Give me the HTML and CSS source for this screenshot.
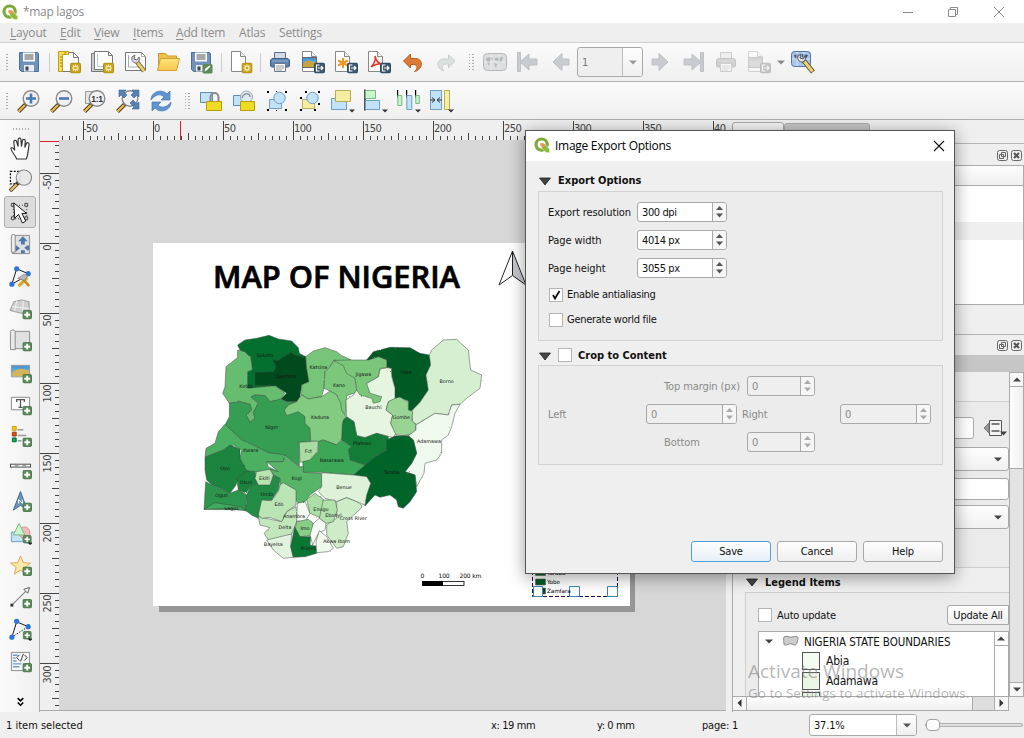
FILE: index.html
```html
<!DOCTYPE html>
<html lang="en">
<head>
<meta charset="utf-8">
<title>*map lagos</title>
<link rel="stylesheet" href="styles.css">
</head>
<body>
<svg class="sprite" aria-hidden="true">
  <defs>
    <linearGradient id="gSky" x1="0" y1="0" x2="0" y2="1"><stop offset="0" stop-color="#3d8fd0"/><stop offset="1" stop-color="#9cc9dc"/></linearGradient>
    <linearGradient id="gFolder" x1="0" y1="0" x2="0" y2="1"><stop offset="0" stop-color="#ffe47a"/><stop offset="1" stop-color="#f6c54c"/></linearGradient>
    <symbol id="logo" viewBox="0 0 16 16"><circle cx="7.6" cy="7.6" r="5.6" fill="none" stroke="#7fa93a" stroke-width="3.2"/><path d="M7.5 7.5h3.6l4.6 4.8v3.4h-3.6L7.5 11z" fill="#8fb83a" stroke="#fff" stroke-width=".6"/><path d="M6.4 6.2h3.4l1.6 1.7-2.4 2.6-2.6-2z" fill="#e8944a"/></symbol>
    <symbol id="b-plus" viewBox="0 0 10 10"><rect x=".5" y=".5" width="9" height="9" rx="1.5" fill="#5a8a5a" stroke="#47784a"/><path d="M5 2v6M2 5h6" stroke="#fff" stroke-width="2"/></symbol>
    <symbol id="b-new" viewBox="0 0 11 11"><rect x=".5" y=".5" width="10" height="10" rx="1.5" fill="#c9a21b" stroke="#b08c10"/><path d="M5.500 2v7M2 5.500h7M3 3l5 5M8 3L3 8" stroke="#fff7d0" stroke-width="1.100"/><circle cx="5.500" cy="5.500" r="1.300" fill="#c9a21b"/></symbol>
    <symbol id="b-exp" viewBox="0 0 11 11"><rect x=".5" y=".5" width="10" height="10" rx="1.500" fill="#3d586d" stroke="#2d475b"/><path d="M5.500 2.500h-3v6h3M4 5.500h4.500M7 3.500l2 2-2 2" fill="none" stroke="#fff" stroke-width="1.200"/></symbol>
    <symbol id="sheet" viewBox="0 0 24 24"><path d="M5.500 1.500h9l5 5v15h-14z" fill="#fff" stroke="#888"/><path d="M14.500 1.500v5h5" fill="#eee" stroke="#888"/></symbol>
    <symbol id="save" viewBox="0 0 24 24"><path d="M2.500 2.500h18l1 1v18h-17l-2-2z" fill="#6d93bd" stroke="#4b6f9a"/><path d="M6 2.500h12v9H6z" fill="#fbfbfb"/><path d="M7.500 5h9M7.500 7h9M7.500 9h9" stroke="#555"/><path d="M7 15h10v6.500H7z" fill="#e9edf0"/><path d="M8.500 16.500h3v4h-3z" fill="#445"/></symbol>
    <symbol id="saveas" viewBox="0 0 24 24"><use href="#save"/><rect x="13.500" y="14" width="10" height="9.500" rx="1.500" fill="#5a8a5a"/><path d="M15.500 21.500l1-3 4-3 1 1-4 4z" fill="#fff"/></symbol>
    <symbol id="newlayout" viewBox="0 0 24 24"><path d="M4.500 2.500h12l5 5v14h-17z" fill="#fff" stroke="#777"/><path d="M16.500 2.500v5h5" fill="none" stroke="#777"/><path d="M1.500 1.500h10v3h-6v17h-4z" fill="#f5dc5b" stroke="#c29d16"/><path d="M3 7h2M3 10h2M3 13h2M3 16h2M8 2v2" stroke="#a8850c"/><use href="#b-new" x="13" y="12.500" width="11" height="11"/></symbol>
    <symbol id="duplayout" viewBox="0 0 24 24"><path d="M1.500 3.500h15v18h-15z" fill="#ccc" stroke="#777"/><path d="M4.500 1.500h14l4 4v14h-18z" fill="#fff" stroke="#777"/><path d="M18.500 1.500v4h4" fill="none" stroke="#777"/><path d="M7.500 3.500v13h12" fill="none" stroke="#b9c4e6"/><use href="#b-new" x="13" y="12.500" width="11" height="11"/></symbol>
    <symbol id="mgr" viewBox="0 0 24 24"><path d="M2.500 2.500h16l4 4v14h-20z" fill="#fff" stroke="#777"/><path d="M18.500 2.500v4h4M5.500 5v12h14" fill="none" stroke="#a9a9b5"/><path d="M14 12l7 9" stroke="#8b7330" stroke-width="4.500"/><path d="M14 12l7 9" stroke="#e9d27a" stroke-width="2.500"/><path d="M9 7c-1 4 1 6 5 6 2-1 3-3 2-6l-2 3-3-1 1-4z" fill="#ddd" stroke="#666"/></symbol>
    <symbol id="folder" viewBox="0 0 24 24"><path d="M2.500 20V3.500h7l2 2.500h9v3" fill="#f0c24c" stroke="#c9962a"/><path d="M1.500 20.500l3-12h19l-3 12z" fill="url(#gFolder)" stroke="#d0a030"/></symbol>
    <symbol id="addpage" viewBox="0 0 24 24"><g transform="translate(-3)"><use href="#sheet"/></g><use href="#b-new" x="12.500" y="12.500" width="11" height="11"/></symbol>
    <symbol id="print" viewBox="0 0 24 24"><path d="M6.500 2.500h11v7h-11z" fill="#d5dbe2" stroke="#5b718a"/><path d="M4 8.500h16l1.500 1.500v6l-1 1h-17l-1-1v-6z" fill="#5d84b0" stroke="#3e5f86"/><path d="M4 11h16" stroke="#94b2d2"/><path d="M6.500 13.500h11v8h-11z" fill="#fff" stroke="#6a7a8a"/><path d="M8 16h8M8 18h8M8 20h6" stroke="#999"/></symbol>
    <symbol id="expimg" viewBox="0 0 24 24"><g transform="translate(-4)"><use href="#sheet"/></g><path d="M1.500 7.500h14v10h-14z" fill="url(#gSky)" stroke="#667"/><path d="M2 14c3-4 6-4 13-1v4H2z" fill="#c9a43c"/><use href="#b-exp" x="13" y="12.500" width="11" height="11"/></symbol>
    <symbol id="expsvg" viewBox="0 0 24 24"><g transform="translate(-4)"><use href="#sheet"/></g><path d="M9 8v10M4 10.500l10 5M14 10.500l-10 5" stroke="#f0941f" stroke-width="2"/><use href="#b-exp" x="13" y="12.500" width="11" height="11"/></symbol>
    <symbol id="exppdf" viewBox="0 0 24 24"><g transform="translate(-4)"><use href="#sheet"/></g><path d="M4 17c3-3 5-7 4-11 1 5 3 8 8 8-5-1-9 1-12 3z" fill="none" stroke="#e0352b" stroke-width="1.500"/><use href="#b-exp" x="13" y="12.500" width="11" height="11"/></symbol>
    <symbol id="undo" viewBox="0 0 24 24"><path d="M2.500 11L9.500 4v4.500h5c8 0 8 11-1 13 4-3 3-7-1-7h-3V18z" fill="#dd7a35" stroke="#b85e1e"/></symbol>
    <symbol id="redo" viewBox="0 0 24 24"><path d="M21 11l-6.500-6v4H10c-8 0-8 10 0 12-3-3-2-7 2-7h2.500V18z" fill="#dde1dd" stroke="#c9cdc9"/></symbol>
    <symbol id="atlas" viewBox="0 0 24 24"><rect x=".5" y="3.500" width="23" height="17" rx="4" fill="#dcdedf" stroke="#b5b7b8"/><path d="M3 8l5-1 2 2-3 2-1 5-2-4zM12 8l8-1-1 4-3 3-1-3-3-1zM11 13l3 1-1 4z" fill="#b4b7b9"/><path d="M8 4v16M16 4v16M1 12h22" stroke="#e9eaeb"/></symbol>
    <symbol id="first" viewBox="0 0 24 24"><path d="M1.500 2.500h3v19h-3zM4 12l9-8v5h8v6h-8v5z" fill="#c8ccd0" stroke="#bcc0c4"/></symbol>
    <symbol id="prev" viewBox="0 0 24 24"><path d="M4 12l9-8.500V9h7v6h-7v5.500z" fill="#c8ccd0" stroke="#bcc0c4"/></symbol>
    <symbol id="next" viewBox="0 0 24 24"><path d="M20 12l-9-8.500V9H4v6h7v5.500z" fill="#c8ccd0" stroke="#bcc0c4"/></symbol>
    <symbol id="last" viewBox="0 0 24 24"><path d="M19.500 2.500h3v19h-3zM20 12l-9-8v5H3v6h8v5z" fill="#c8ccd0" stroke="#bcc0c4"/></symbol>
    <symbol id="atlasset" viewBox="0 0 24 24"><rect x=".5" y="1.500" width="19" height="15" rx="3" fill="#a9c3ea" stroke="#4d72ac"/><path d="M3 5l4-1 1 3-3 3zM11 4l6 1-2 4-4-2z" fill="#3c5878"/><path d="M6 2v14M13 2v14M1 9h18" stroke="#dce9fb"/><path d="M13 11l9 11" stroke="#5d5430" stroke-width="5"/><path d="M13.500 11.500l8 10" stroke="#ecd279" stroke-width="3"/><path d="M7 6c-1 4 1 6 5 6 2-1 3-3 2-6l-2 3-3-1 1-4z" fill="#e6e6e6" stroke="#555"/></symbol>
    <symbol id="lens" viewBox="0 0 24 24"><path d="M1.500 22.500l8-8" stroke="#3a3320" stroke-width="4"/><path d="M1.500 22.500l6.500-6.500" stroke="#efb949" stroke-width="2.400"/><circle cx="14" cy="9.500" r="7.800" fill="#f1f1f3" stroke="#8a8a8a" stroke-width="1.400"/></symbol>
    <symbol id="zin" viewBox="0 0 24 24"><use href="#lens"/><path d="M14 4.500v10M9 9.500h10" stroke="#4679b5" stroke-width="2.600"/></symbol>
    <symbol id="zout" viewBox="0 0 24 24"><use href="#lens"/><path d="M9 9.500h10" stroke="#4679b5" stroke-width="2.600"/></symbol>
    <symbol id="z11" viewBox="0 0 24 24"><path d="M2.500 2.500h12v12h-12z" fill="#e6e6e6" stroke="#999"/><use href="#lens"/><text x="14" y="13" class="z11" text-anchor="middle">1:1</text></symbol>
    <symbol id="zfull" viewBox="0 0 24 24"><use href="#lens"/><g fill="#5482b5" stroke="#3d6596" stroke-width=".6"><path d="M3 1h7L8 3l3 3-3 3-3-3-2 2zM23 1h-7l2 2-3 3 3 3 3-3 2 2zM23 20h-7l2-2-4-4 3-3 4 4 2-2z"/></g></symbol>
    <symbol id="refresh" viewBox="0 0 24 24"><path d="M2 11C2 3 12-1 18 5l3-3v9h-9l3-3C11 4 6 6 2 11zM22 13c0 8-10 12-16 6l-3 3v-9h9l-3 3c4 4 9 2 13-3z" fill="#5f95cf" stroke="#4478b3" stroke-width=".7"/></symbol>
    <symbol id="lock" viewBox="0 0 24 24"><path d="M1.500 3.500h12v10h-12z" fill="#c2e2f8" stroke="#5f8cb0"/><path d="M11.500 13V8.500c0-6 8-6 8 0V13" fill="none" stroke="#8a8a8a" stroke-width="2"/><path d="M7.500 12.500h15v9h-15z" fill="#efdb22" stroke="#b79c10"/></symbol>
    <symbol id="unlock" viewBox="0 0 24 24"><path d="M1.500 6.500h12v10h-12z" fill="#c2e2f8" stroke="#5f8cb0"/><circle cx="14.500" cy="8" r="6" fill="#dcebf4" stroke="#9aa"/><path d="M10 9c2-6 8-5 8-1" fill="none" stroke="#999" stroke-width="1.500"/><path d="M8.500 12.500h14v9h-14z" fill="#efdb22" stroke="#b79c10"/></symbol>
    <symbol id="group" viewBox="0 0 24 24"><path d="M4.500 10.500h12v9h-12z" fill="#c2e2f8" stroke="#6d9dc2"/><circle cx="14.500" cy="9" r="5.700" fill="#c2e2f8" stroke="#6d9dc2"/><path d="M2 2h2v2H2zM20 2h2v2h-2zM2 20h2v2H2zM20 20h2v2h-2zM11 2h1v1h-1zM11 21h1v1h-1z" fill="#000"/></symbol>
    <symbol id="ungroup" viewBox="0 0 24 24"><path d="M4.500 10.500h12v9h-12z" fill="#f4eea0" stroke="#b5ad5c"/><circle cx="14.500" cy="9" r="5.700" fill="#c2e2f8" stroke="#6d9dc2"/><path d="M7 2h2v2H7zM20 2h2v2h-2zM2 8h2v2H2zM20 14h2v2h-2zM2 20h2v2H2zM16 20h2v2h-2z" fill="#000"/></symbol>
    <symbol id="raise" viewBox="0 0 24 24"><path d="M.500 9.500h15v11h-15z" fill="#c2e2f8" stroke="#6d9dc2"/><path d="M4.500 1.500h15v11h-15z" fill="#f4eea0" stroke="#b5ad5c"/><path d="M18 20.500h6l-3 3z" fill="#333"/></symbol>
    <symbol id="alignl" viewBox="0 0 24 24"><path d="M1 .500v21" stroke="#000" stroke-width="1.300"/><path d="M1.500 1.500h10v8h-10z" fill="#c9f5cc" stroke="#79b881"/><path d="M1.500 11.500h14v9h-14z" fill="#c2e2f8" stroke="#6d9dc2"/><path d="M18 20.500h6l-3 3z" fill="#333"/></symbol>
    <symbol id="distr" viewBox="0 0 24 24"><path d="M.600 1v8M9.600 1v8M18.600 1v8" stroke="#000" stroke-width="1.200"/><path d="M.800 6.500h4v10h-4zM18.800 6.500h3.500v8h-3.500z" fill="#c9f5cc" stroke="#79b881"/><path d="M9.800 6.500h5v14h-5z" fill="#c2e2f8" stroke="#6d9dc2"/><path d="M18 20.500h6l-3 3z" fill="#333"/></symbol>
    <symbol id="resize" viewBox="0 0 24 24"><path d="M.500 1.500h11v19h-11z" fill="#c2e2f8" stroke="#6d9dc2"/><path d="M14.500 1.500h5v19h-5z" fill="#f4eea0" stroke="#b5ad5c"/><path d="M0 11h4M2 8.500l3 2.500-3 2.500M12 11H8M10 8.500L7 11l3 2.500" fill="none" stroke="#333"/><path d="M18 20.500h6l-3 3z" fill="#333"/></symbol>
    <symbol id="hand" viewBox="0 0 24 24"><path d="M8 23c-1-4-5-6-6-11 1-2 3 0 4 2L5 5c0-2 3-2 3 0l1.500 5V3c0-2.500 3-2.500 3 0l.500 7L14 4c0-2 3-2 3 0l-.500 7L18 7c1-2 3-1 3 1-1 5-1 11-3 15z" fill="#fff" stroke="#333" stroke-width="1.200"/></symbol>
    <symbol id="zsel" viewBox="0 0 24 24"><path d="M1.500 2.500h10v13h-10z" fill="none" stroke="#000" stroke-width="1.300" stroke-dasharray="2 1.500"/><path d="M1 23l9-9" stroke="#3a3320" stroke-width="4"/><path d="M1.500 22.500L8 16" stroke="#e8bd6c" stroke-width="2.400"/><circle cx="15.500" cy="9" r="8" fill="#e7e7e7" fill-opacity=".9" stroke="#8a8a8a" stroke-width="1.200"/></symbol>
    <symbol id="select" viewBox="0 0 24 24"><path d="M4.500 4.500h14v14h-14z" fill="none" stroke="#333" stroke-dasharray="1 2"/><path d="M2.500 2.500h3v3h-3zM16.500 2.500h3v3h-3zM2.500 16.500h3v3h-3zM16.500 16.500h3v3h-3z" fill="#ddd" stroke="#444"/><path d="M5 2l1 16 4-4 4 9 3.500-2-4-8 5 0z" fill="#fff" stroke="#111"/></symbol>
    <symbol id="movec" viewBox="0 0 24 24"><path d="M3.500 2.500h18v19h-18z" fill="#e0e0e0" stroke="#8a8a8a"/><path d="M2.500 3c0-2 4-2 4 0v17h-4z" fill="#eee" stroke="#8a8a8a"/><path d="M14.500 3.500l5 5h-3V12h-4V8.500h-3zM21 13v5h-2l-3-2.500 3-2.500zM7 12.500l4.500 3.500L7 19.500zM12.500 18h4v3h-4z" fill="#4c79af"/></symbol>
    <symbol id="nodes" viewBox="0 0 24 24"><path d="M3 20L8 4l12 5M3 20l9-5" fill="none" stroke="#111"/><g fill="#2e74d6"><circle cx="8" cy="4" r="2.700"/><circle cx="20" cy="9" r="2.700"/><circle cx="3" cy="20" r="2.700"/></g><path d="M10 22l9-9" stroke="#d9a92c" stroke-width="3.500"/><path d="M14 14l7 8" stroke="#c9902c" stroke-width="3"/><path d="M9 14l6-4 5 1-4 5z" fill="#bbb" stroke="#777" stroke-width=".7"/></symbol>
    <symbol id="a3d" viewBox="0 0 24 24"><path d="M1 14L5 5l8-2 8 2v13l-8-1z" fill="#cfcfcf" stroke="#999"/><path d="M3 10l18 2M8 4L6 15M15 4l-1 12" fill="none" stroke="#f3f3f3"/><use href="#b-plus" x="14" y="13.500" width="10" height="10"/></symbol>
    <symbol id="amap" viewBox="0 0 24 24"><path d="M3.500 2.500h18v18h-18z" fill="#e0e0e0" stroke="#8a8a8a"/><path d="M1.500 2.500c0-2 5-2 5 0v19h-5z" fill="#e8e8e8" stroke="#8a8a8a"/><use href="#b-plus" x="14" y="13.500" width="10" height="10"/></symbol>
    <symbol id="aimg" viewBox="0 0 24 24"><path d="M2.500 4.500h19v12h-19z" fill="url(#gSky)" stroke="#999"/><path d="M3 13c5-6 10-5 18-3v6H3z" fill="#d5b45a"/><use href="#b-plus" x="14" y="13.500" width="10" height="10"/></symbol>
    <symbol id="alab" viewBox="0 0 24 24"><path d="M2.500 4.500h19v13h-19z" fill="#fcfcfc" stroke="#888"/><path d="M8 9.500V7h8v2.500M12 7v8M10 15h4" fill="none" stroke="#555" stroke-width="1.300"/><use href="#b-plus" x="14" y="13.500" width="10" height="10"/></symbol>
    <symbol id="aleg" viewBox="0 0 24 24"><path d="M3.500 1.500h4v4h-4z" fill="#fbc81c" stroke="#d29a00"/><path d="M3.500 7.500h4v4h-4z" fill="#e04f18" stroke="#a63506"/><path d="M3.500 13.500h4v4h-4z" fill="#17a35b" stroke="#086a36"/><path d="M9 5h6M9 11h9M9 16.500h4" stroke="#999" stroke-width="1.600"/><use href="#b-plus" x="14" y="13" width="10" height="10"/></symbol>
    <symbol id="ascale" viewBox="0 0 24 24"><rect x="1.500" y="7.500" width="21" height="3" fill="#fff" stroke="#444"/><path d="M6 9h4M14 9h4" stroke="#999" stroke-width="2"/><use href="#b-plus" x="14" y="13.500" width="10" height="10"/></symbol>
    <symbol id="anorth" viewBox="0 0 24 24"><path d="M12 1.500L4.500 21l7.500-5 7 5z" fill="#6e95be" stroke="#3f6590"/><path d="M10 14v-4l4 4v-4" fill="none" stroke="#fff"/><use href="#b-plus" x="14" y="13" width="10" height="10"/></symbol>
    <symbol id="ashape" viewBox="0 0 24 24"><path d="M2.500 10.500h12v10h-12z" fill="#c2e2f8" stroke="#6d9dc2"/><circle cx="16" cy="11" r="5.800" fill="#f5b9bb" stroke="#d88"/><path d="M10.500 1.500l6 12h-12z" fill="#c9f5cc" stroke="#79b881"/><use href="#b-plus" x="14" y="13.500" width="10" height="9"/><path d="M19 21.500h6l-3 2.500z" fill="#222"/></symbol>
    <symbol id="astar" viewBox="0 0 24 24"><path d="M12 2l3 7 7.500.500-6 4.500 2 7L12 17l-6.500 4 2-7-6-4.500L9 9z" fill="#fbe8a5" stroke="#dca85c"/><use href="#b-plus" x="14" y="13" width="10" height="10"/></symbol>
    <symbol id="aarrow" viewBox="0 0 24 24"><path d="M3 20L19 4" stroke="#888" stroke-width="1.300"/><path d="M21.500 1.500l-2 6-4-4z" fill="#fff" stroke="#555"/><path d="M1.500 18.500h3v3h-3z" fill="#333"/><use href="#b-plus" x="14" y="13.500" width="10" height="10"/></symbol>
    <symbol id="anode" viewBox="0 0 24 24"><path d="M3 20L8 4l12 5" fill="none" stroke="#111"/><path d="M3 20L20 9" stroke="#111" stroke-dasharray="1.500 1.500"/><g fill="#2e74d6"><circle cx="8" cy="3.500" r="2.700"/><circle cx="20" cy="9" r="2.700"/><circle cx="3" cy="20" r="2.700"/></g><use href="#b-plus" x="14" y="13.500" width="10" height="9"/><path d="M19 21.500h6l-3 2.500z" fill="#222"/></symbol>
    <symbol id="ahtml" viewBox="0 0 24 24"><path d="M2.500 2.500h19v19h-19z" fill="#f6f6f6" stroke="#888"/><path d="M4 5.500h5M4 8.500h3M4 11.500h4M4 14.500h9M4 17.500h7" stroke="#6d9bd0" stroke-width="1.400"/><path d="M11 5L8 8l3 3M16 5l3 3-3 3M15 4l-3 8" fill="none" stroke="#333"/><use href="#b-plus" x="14" y="13.500" width="10" height="10"/></symbol>
    <symbol id="float" viewBox="0 0 11 11"><rect x=".5" y=".5" width="10" height="10" rx="2" fill="none" stroke="#666"/><path d="M4.500 2.500h4v4h-4zM2.500 4.500h4v4h-4z" fill="#eee" stroke="#666"/></symbol>
    <symbol id="xclose" viewBox="0 0 11 11"><rect x=".5" y=".5" width="10" height="10" rx="2" fill="none" stroke="#666"/><path d="M3 3l5 5M8 3L3 8" stroke="#555" stroke-width="2"/></symbol>
    <symbol id="updown" viewBox="0 0 8 14"><path d="M.500 5L4 1l3.500 4zM.500 8.500L4 12.500l3.500-4z" fill="currentColor"/></symbol>
    <symbol id="down" viewBox="0 0 8 5"><path d="M0 .5h8L4 4.500z" fill="currentColor"/></symbol>
    <symbol id="up" viewBox="0 0 8 5"><path d="M0 4.500h8L4 .5z" fill="currentColor"/></symbol>
    <symbol id="left" viewBox="0 0 5 8"><path d="M4.500 0v8L.500 4z" fill="currentColor"/></symbol>
    <symbol id="right" viewBox="0 0 5 8"><path d="M.500 0v8l4-4z" fill="currentColor"/></symbol>
    <symbol id="fold" viewBox="0 0 12 9"><path d="M.500 1h11L6 8z" fill="#444" stroke="#222" stroke-width=".8"/></symbol>
  </defs>
</svg>

<div class="window">
  <header class="titlebar">
    <svg class="logo"><use href="#logo"/></svg>
    <span class="title">*map lagos</span>
    <svg class="winctl" viewBox="0 0 110 22"><path d="M3 11.500h10M48.500 8.500h7v7h-7zM50.500 8V6.500h7v7H56M94 6l10 10M104 6L94 16" fill="none" stroke="#8a8a8a"/></svg>
  </header>
  <nav class="menubar">
    <span class="m1"><u>L</u>ayout</span><span class="m2"><u>E</u>dit</span><span class="m3"><u>V</u>iew</span><span class="m4"><u>I</u>tems</span><span class="m5"><u>A</u>dd Item</span><span class="m6">Atlas</span><span class="m7">Settings</span>
  </nav>
  <div class="toolbar tb1">
    <i class="grip"></i>
    <b class="btn"><svg><use href="#save"/></svg></b><i class="sep"></i>
    <b class="btn"><svg><use href="#newlayout"/></svg></b><b class="btn"><svg><use href="#duplayout"/></svg></b><b class="btn"><svg><use href="#mgr"/></svg></b><b class="btn"><svg><use href="#folder"/></svg></b><b class="btn"><svg><use href="#saveas"/></svg></b><i class="sep"></i>
    <b class="btn"><svg><use href="#addpage"/></svg></b><i class="sep"></i>
    <b class="btn"><svg><use href="#print"/></svg></b><b class="btn"><svg><use href="#expimg"/></svg></b><b class="btn"><svg><use href="#expsvg"/></svg></b><b class="btn"><svg><use href="#exppdf"/></svg></b><b class="btn"><svg><use href="#undo"/></svg></b><b class="btn"><svg><use href="#redo"/></svg></b>
    <i class="grip wide"></i>
    <b class="btn"><svg><use href="#atlas"/></svg></b><b class="btn"><svg><use href="#first"/></svg></b><b class="btn"><svg><use href="#prev"/></svg></b>
    <div class="combo pagebox"><span>1</span><em><svg><use href="#down"/></svg></em></div>
    <b class="btn"><svg><use href="#next"/></svg></b><b class="btn"><svg><use href="#last"/></svg></b><b class="btn faded"><svg><use href="#print"/></svg></b><b class="btn faded"><svg><use href="#expimg"/></svg></b><b class="drop"><svg><use href="#down"/></svg></b><b class="btn"><svg><use href="#atlasset"/></svg></b>
  </div>
  <div class="toolbar tb2">
    <i class="grip"></i>
    <b class="btn"><svg><use href="#zin"/></svg></b><b class="btn"><svg><use href="#zout"/></svg></b><b class="btn"><svg><use href="#z11"/></svg></b><b class="btn"><svg><use href="#zfull"/></svg></b><b class="btn"><svg><use href="#refresh"/></svg></b>
    <i class="grip wide"></i>
    <b class="btn"><svg><use href="#lock"/></svg></b><b class="btn"><svg><use href="#unlock"/></svg></b><b class="btn"><svg><use href="#group"/></svg></b><b class="btn"><svg><use href="#ungroup"/></svg></b><b class="btn"><svg><use href="#raise"/></svg></b><b class="btn"><svg><use href="#alignl"/></svg></b><b class="btn"><svg><use href="#distr"/></svg></b><b class="btn"><svg><use href="#resize"/></svg></b>
  </div>

  <main class="body">
    <aside class="toolbox">
      <i class="hgrip"></i>
      <b><svg><use href="#hand"/></svg></b><b><svg><use href="#zsel"/></svg></b><b class="on"><svg><use href="#select"/></svg></b><b><svg><use href="#movec"/></svg></b><b><svg><use href="#nodes"/></svg></b><b><svg><use href="#a3d"/></svg></b><b><svg><use href="#amap"/></svg></b><b><svg><use href="#aimg"/></svg></b><b><svg><use href="#alab"/></svg></b><b><svg><use href="#aleg"/></svg></b><b><svg><use href="#ascale"/></svg></b><b><svg><use href="#anorth"/></svg></b><b><svg><use href="#ashape"/></svg></b><b><svg><use href="#astar"/></svg></b><b><svg><use href="#aarrow"/></svg></b><b><svg><use href="#anode"/></svg></b><b><svg><use href="#ahtml"/></svg></b>
      <svg class="more" viewBox="0 0 8 10"><path d="M1.500 1L4 3.500 6.500 1M1.500 5L4 7.500 6.500 5" fill="none" stroke="#000" stroke-width="1.400"/></svg>
    </aside>

    <svg class="canvas" viewBox="40 120 692 592">
      <defs>
        <pattern id="ticksH" x="153" y="121" width="70" height="19" patternUnits="userSpaceOnUse"><path d="M.500 0v19M35.500 12v7M7.500 15v4M14.500 15v4M21.500 15v4M28.500 15v4M42.500 15v4M49.500 15v4M56.500 15v4M63.500 15v4" stroke="#444"/></pattern>
        <pattern id="ticksV" x="40" y="243" width="19" height="70" patternUnits="userSpaceOnUse"><path d="M0 .500h19M12 35.500h7M15 7.500h4M15 14.500h4M15 21.500h4M15 28.500h4M15 42.500h4M15 49.500h4M15 56.500h4M15 63.500h4" stroke="#444"/></pattern>
        <filter id="rough" x="-5%" y="-5%" width="110%" height="110%" color-interpolation-filters="sRGB"><feTurbulence type="fractalNoise" baseFrequency=".16" numOctaves="2" seed="4"/><feDisplacementMap in="SourceGraphic" scale="5" xChannelSelector="R" yChannelSelector="G"/></filter>
      </defs>
      <rect x="40" y="120" width="692" height="592" fill="#efefef"/>
      <rect x="59" y="140" width="667" height="570" fill="#d7d7d7"/>
      <rect x="60" y="121" width="666" height="19" fill="url(#ticksH)"/>
      <rect x="40" y="145" width="19" height="565" fill="url(#ticksV)"/>
      <path d="M39.500 121v590M40 710.500h686" stroke="#aaa"/>
      <path d="M40 141.500h19M180.500 121v19" stroke="#d81e2c"/>
      <g class="rul">
        <text x="83" y="132">-50</text><text x="154" y="132">0</text><text x="224" y="132">50</text><text x="294" y="132">100</text><text x="364" y="132">150</text><text x="434" y="132">200</text><text x="504" y="132">250</text><text x="574" y="132">300</text><text x="644" y="132">350</text><text x="714" y="132">40</text>
        <g text-anchor="end"><text transform="translate(51 175) rotate(-90)">-50</text><text transform="translate(51 245) rotate(-90)">0</text><text transform="translate(51 315) rotate(-90)">50</text><text transform="translate(51 385) rotate(-90)">100</text><text transform="translate(51 455) rotate(-90)">150</text><text transform="translate(51 525) rotate(-90)">200</text><text transform="translate(51 595) rotate(-90)">250</text><text transform="translate(51 666) rotate(-90)">300</text></g>
      </g>
      <rect x="159" y="249" width="476" height="363" fill="#969696"/>
      <rect x="153" y="243" width="477" height="363" fill="#fff"/>
      <text class="maptitle" x="213" y="288" textLength="247" lengthAdjust="spacingAndGlyphs">MAP OF NIGERIA</text>
      <path d="M512.500 251v25L525 285z" fill="#c3c8cc"/><path d="M512.500 251L499 285l13.500-9.500L526 285zM512.500 252v23" fill="none" stroke="#222"/>

      <g transform="translate(190 325) scale(.33333)">
        <g filter="url(#rough)" stroke="#3f4a42" stroke-width="1.500" stroke-linejoin="round">
          <path fill="#04702f" d="M143 60L165 45 200 40 237 31 265 42 305 48 325 68 328 85 347 95 300 140 255 182 172 192 170 185 172 140 187 133 182 95 150 75z"/>
          <path fill="#66bd6f" d="M143 75L165 80 182 98 187 135 173 140 173 190 255 182 285 205 270 225 240 230 225 212 195 210 183 216 205 228 200 245 190 262 195 280 180 292 168 270 185 255 180 238 150 230 118 235 105 215 98 205 105 185 108 125 142 98z"/>
          <path fill="#004a1d" d="M247 103L262 107 290 90 303 82 320 92 347 95 350 130 357 170 335 180 330 215 320 230 290 230 273 222 290 205 255 182 195 181 195 142 250 140 258 125z"/>
          <path fill="#359e52" d="M118 235L150 230 180 238 185 255 168 270 180 292 195 280 190 262 205 235 183 216 195 210 225 212 240 230 273 222 290 232 320 230 345 275 362 310 362 350 328 352 328 425 285 390 235 384 185 358 155 345 105 300 118 275z"/>
          <path fill="#77c578" d="M347 95L370 78 405 68 440 80 455 92 480 103 500 115 480 118 430 108 420 125 440 130 405 140 402 190 395 215 355 222 335 210 335 180 357 170 350 130z"/>
          <path fill="#7bc77c" d="M420 125L435 105 470 115 485 140 495 160 505 200 470 212 468 245 465 275 452 255 440 210 420 198 402 190 405 140z"/>
          <path fill="#82cb81" d="M335 210L355 222 395 215 420 198 440 210 452 235 455 255 468 275 457 295 460 335 440 360 400 345 385 350 362 348 360 310 345 295 345 275 325 260 290 272 283 255 295 240 320 230z"/>
          <path fill="#005a24" d="M530 105L550 80 600 67 660 68 690 85 718 90 722 120 708 150 715 195 690 232 665 258 655 255 655 228 630 218 615 225 615 190 605 150 600 128 590 128 590 105 565 95 545 107z"/>
          <path fill="#e5f5e0" d="M590 128L605 130 605 155 615 190 615 222 595 230 588 255 608 270 602 295 618 325 610 338 560 325 525 338 500 332 492 290 470 275 468 225 490 210 500 195 530 175 565 155 570 132z"/>
          <path fill="#7ac77b" d="M430 106L480 105 535 105 565 95 590 105 590 128 570 130 565 155 530 175 540 205 575 215 570 230 550 235 545 220 510 210 500 195 495 160 470 145 460 122z"/>
          <path fill="#d6efd0" d="M718 90L725 75 760 45 800 43 835 75 842 135 875 150 870 190 830 220 810 238 785 240 775 270 735 265 680 298 668 292 665 258 690 232 715 195 708 150 722 120z"/>
          <path fill="#98d594" d="M615 220L630 216 655 232 655 255 668 260 665 285 678 300 675 325 640 332 618 330 602 295 608 270 588 255 595 230z"/>
          <path fill="#f0f9ed" d="M810 238L795 265 785 305 775 330 755 345 755 385 740 405 705 415 702 445 680 485 675 450 645 440 665 415 680 385 670 345 655 332 678 315 678 300 735 265 775 270 785 240z"/>
          <path fill="#137d37" d="M460 285L470 276 492 290 500 332 525 338 560 325 595 335 595 350 590 375 555 395 525 420 480 405 475 372 485 365 455 345 457 300z"/>
          <path fill="#006428" d="M590 345L615 333 655 332 670 345 680 385 665 415 645 440 675 450 680 500 660 530 640 550 625 545 620 525 600 510 570 517 555 510 525 543 530 510 542 475 530 455 490 450 525 420 555 395 590 375z"/>
          <path fill="#3ba757" d="M385 350L400 345 440 360 455 345 485 365 475 372 480 405 525 420 490 450 395 442 340 442 338 410 360 400 385 380z"/>
          <path fill="#4cb062" d="M45 397L48 370 75 355 85 320 105 298 155 345 185 358 235 383 285 390 280 410 230 410 235 425 265 440 245 445 200 440 170 450 150 400 155 375 130 360 100 375z"/>
          <path fill="#56b567" d="M230 410L280 410 285 390 325 425 340 425 340 442 395 445 395 485 360 510 345 530 322 535 310 495 285 475 270 495 270 460 250 450 240 433 265 440z"/>
          <path fill="#a8dca2" d="M328 352L385 348 382 380 360 405 330 412z"/>
          <path fill="#1b853f" d="M45 397L100 375 120 360 150 372 150 400 170 437 160 450 145 455 138 480 120 505 90 490 65 480 50 465 45 435z"/>
          <path fill="#2d964d" d="M47 470L65 480 120 505 145 495 170 510 167 555 42 553z"/>
          <path fill="#40aa5d" d="M42 553L75 533 150 545 170 558 120 550z"/>
          <path fill="#228c46" d="M170 510L180 485 205 475 240 480 250 450 270 460 265 495 245 525 220 530 205 580 185 570 165 555 170 535z"/>
          <path fill="#1a843f" d="M170 437L195 440 200 460 205 475 180 485 168 505 145 495 140 460z"/>
          <path fill="#b9e3b2" d="M200 440L240 433 250 450 240 480 205 480 195 460z"/>
          <path fill="#c3e7bc" d="M205 575L275 590 290 560 318 545 322 585 310 615 305 627 275 640 235 645 222 625 240 608 210 600z"/>
          <path fill="#bbe4b4" d="M270 480L280 473 318 495 318 540 290 560 275 590 240 577 215 580 205 570 215 525 245 527 265 500z"/>
          <path fill="#ddf2d8" d="M395 443L490 450 530 455 542 475 530 510 525 540 500 530 470 518 440 530 405 520 385 500 395 485z"/>
          <path fill="#ceecc8" d="M440 530L470 518 500 530 515 540 515 548 470 590 475 625 460 665 440 670 410 630 410 600 440 580z"/>
          <path fill="#f3faf0" d="M322 535L345 530 360 565 345 590 320 588z"/>
          <path fill="#abdfa5" d="M350 523L375 505 400 523 400 555 390 578 360 565z"/>
          <path fill="#b2e1ab" d="M400 525L435 525 442 555 430 590 408 595 388 580z"/>
          <path fill="#88ce87" d="M320 590L355 583 370 595 362 632 330 635 315 615z"/>
          <path fill="#f7fcf5" d="M370 595L388 580 408 595 405 615 385 625 368 660 360 630z"/>
          <path fill="#e3f4de" d="M230 645L305 627 302 665 310 697 280 700 250 675z"/>
          <path fill="#0b7734" d="M314 605L330 635 362 635 360 660 378 663 380 685 345 695 310 697 302 665 308 635z"/>
          <path fill="#f0f9ed" d="M378 650L388 617 410 635 430 670 415 680 380 683z"/>
        </g>
        <g class="st">
          <text x="225" y="95">Sokoto</text><text x="287" y="159">Zamfara</text><text x="168" y="188">Kebbi</text><text x="385" y="132">Katsina</text><text x="447" y="186">Kano</text><text x="520" y="152">Jigawa</text><text x="648" y="147">Yobe</text><text x="770" y="175">Borno</text><text x="550" y="253">Bauchi</text><text x="634" y="282">Gombe</text><text x="390" y="281">Kaduna</text><text x="245" y="312">Niger</text><text x="717" y="355">Adamawa</text><text x="516" y="361">Plateau</text><text x="182" y="380">Kwara</text><text x="355" y="384">Fct</text><text x="425" y="412">Nasarawa</text><text x="105" y="435">Oyo</text><text x="605" y="447">Taraba</text><text x="320" y="465">Kogi</text><text x="223" y="466">Ekiti</text><text x="168" y="477">Osun</text><text x="462" y="493">Benue</text><text x="95" y="516">Ogun</text><text x="231" y="513">Ondo</text><text x="267" y="542">Edo</text><text x="125" y="556">Lagos</text><text x="393" y="557">Enugu</text><text x="430" y="576">Ebonyi</text><text x="490" y="585">Cross River</text><text x="312" y="579">Anambra</text><text x="285" y="612">Delta</text><text x="345" y="614">Imo</text><text x="250" y="664">Bayelsa</text><text x="355" y="674">Rivers</text><text x="440" y="653">Akwa Ibom</text>
        </g>
      </g>
      <rect x="422.500" y="581.500" width="41.500" height="4" fill="#fff" stroke="#000" stroke-width=".8"/><rect x="422" y="581" width="21" height="5"/>
      <g class="sb"><text x="420.500" y="577.500">0</text><text x="438.500" y="577.500">100</text><text x="459.500" y="577.500">200 km</text></g>
      <g stroke="#666" stroke-width=".6"><path fill="#006428" d="M535.500 570h10v5.500h-10z"/><path fill="#005a24" d="M535.500 579h10v6h-10z"/><path fill="#004a1d" d="M535.500 588h10v6h-10z"/></g>
      <path d="M532.500 565v31.500h85V565" fill="none" stroke="#20104a" stroke-dasharray="4 2"/>
      <path d="M533.500 586.500h9v10h-9zM569.500 586.500h10v10h-10zM607.500 586.500h10v10h-10z" fill="#fff" stroke="#3b87b0"/>
      <g class="lg"><text x="547" y="575">Taraba</text><text x="547" y="584">Yobe</text><text x="547" y="593">Zamfara</text></g>
    </svg>

    <aside class="dock">
      <div class="tabs"><span class="tab cur">Items</span><span class="tab">Undo History</span></div>
      <div class="dockhead"><svg><use href="#float"/></svg><svg><use href="#xclose"/></svg></div>
      <div class="list"><div class="lhead"></div><div class="lrow"></div></div>
      <div class="dockhead second"><svg><use href="#float"/></svg><svg><use href="#xclose"/></svg></div>
      <div class="band"></div>
      <div class="props">
        <div class="pcol">
          <div class="ptop"></div>
          <div class="pgroup">
            <div class="prow"><div class="edit short"></div><svg class="override" viewBox="0 0 24 18"><path d="M6.500 1.500h12v15h-12z" fill="#f5f5f5" stroke="#555"/><path d="M8.500 5h8M8.500 12h8" stroke="#555" stroke-width="1.400"/><path d="M6 4L1 9l5 5z" fill="#999" stroke="#777"/><path d="M17 12.500h7l-3.500 4z" fill="#444"/></svg></div>
            <div class="pcombo"><svg><use href="#down"/></svg></div>
            <div class="edit"></div>
            <div class="pcombo last"><svg><use href="#down"/></svg></div>
          </div>
          <h3 class="ltitle"><svg><use href="#fold"/></svg>Legend Items</h3>
          <div class="lgroup">
            <div class="auto"><i class="chk"></i><span>Auto update</span><button>Update All</button></div>
            <div class="tree">
              <div class="nodesbox">
                <div class="tn"><svg class="tarr"><use href="#down"/></svg><svg class="poly" viewBox="0 0 17 13"><path d="M2 2c3-2 5 1 8 0s6-1 6 1-1 7-3 7-4-2-6-1-5 2-5 0-1-5 0-7z" fill="#ccc" stroke="#888"/></svg><span>NIGERIA STATE BOUNDARIES</span></div>
                <div class="leaf"><i></i><span>Abia</span></div>
                <div class="leaf"><i class="g"></i><span>Adamawa</span></div>
                <div class="leaf"><i class="g"></i></div>
              </div>
              <div class="tscroll"><em><svg><use href="#up"/></svg></em></div>
            </div>
          </div>
          <div class="hscroll"><em><svg class="v"><use href="#left"/></svg></em><i></i><em class="r"><svg class="v"><use href="#right"/></svg></em></div>
        </div>
        <div class="vscroll"><em><svg><use href="#up"/></svg></em><i></i><em class="bot"><svg><use href="#down"/></svg></em></div>
      </div>
    </aside>
  </main>

  <footer class="status">
    <span class="s1">1 item selected</span><span class="s2">x: 19 mm</span><span class="s3">y: 0 mm</span><span class="s4">page: 1</span>
    <div class="combo zoom"><span>37.1%</span><em><svg><use href="#down"/></svg></em></div>
    <div class="slider"><i></i></div>
  </footer>

  <section class="dialog">
    <header><svg class="logo"><use href="#logo"/></svg><span>Image Export Options</span><svg class="x" viewBox="0 0 12 12"><path d="M1 1l10 10M11 1L1 11" stroke="#111" stroke-width="1.100"/></svg></header>
    <div class="dbody">
      <h3><svg><use href="#fold"/></svg>Export Options</h3>
      <div class="gbox g1">
        <div class="frow"><label>Export resolution</label><div class="spin"><span>300 dpi</span><em><svg><use href="#updown"/></svg></em></div></div>
        <div class="frow"><label>Page width</label><div class="spin"><span>4014 px</span><em><svg><use href="#updown"/></svg></em></div></div>
        <div class="frow"><label>Page height</label><div class="spin"><span>3055 px</span><em><svg><use href="#updown"/></svg></em></div></div>
        <div class="crow"><i class="chk"><svg viewBox="0 0 12 12"><path d="M3 6l2 3.500L9.500 2" fill="none" stroke="#111" stroke-width="1.800"/></svg></i><span>Enable antialiasing</span></div>
        <div class="crow"><i class="chk"></i><span>Generate world file</span></div>
      </div>
      <h3 class="h2"><svg><use href="#fold"/></svg><i class="chk"></i>Crop to Content</h3>
      <div class="gbox g2">
        <div class="frow"><label class="top">Top margin (px)</label><div class="spin sm"><span>0</span><em><svg><use href="#updown"/></svg></em></div></div>
        <div class="frow"><label class="lf">Left</label><div class="spin lg2"><span>0</span><em><svg><use href="#updown"/></svg></em></div><label class="rt">Right</label><div class="spin lg2"><span>0</span><em><svg><use href="#updown"/></svg></em></div></div>
        <div class="frow"><label class="top">Bottom</label><div class="spin sm"><span>0</span><em><svg><use href="#updown"/></svg></em></div></div>
      </div>
      <div class="buttons"><button class="primary">Save</button><button>Cancel</button><button>Help</button></div>
    </div>
  </section>

  <div class="watermark"><div class="w1">Activate Windows</div><div class="w2">Go to Settings to activate Windows.</div></div>
</div>
</body>
</html>
```
FILE: styles.css
```css
* { box-sizing: border-box; }
body { margin: 0; font-family: "DejaVu Sans Condensed", "DejaVu Sans", sans-serif; font-stretch: condensed; font-size: 11px; color: #111; letter-spacing: -.2px; }
svg { display: block; }
i, em { font-style: normal; display: block; }
b { font-weight: normal; }
button { font: inherit; letter-spacing: inherit; color: inherit; padding: 0; border: 1px solid #a9a9a9; border-radius: 3px; background: linear-gradient(#fefefe, #efefef); }
.sprite { position: absolute; width: 0; height: 0; }
.window { position: relative; width: 1024px; height: 738px; overflow: hidden; background: #efefef; display: flex; flex-direction: column; }
.logo { width: 16px; height: 16px; }
.z11 { font: bold 8.500px "Liberation Sans", sans-serif; letter-spacing: -.3px; fill: #333; }

.titlebar { height: 23px; background: #fff; display: flex; align-items: center; padding-left: 2px; font: 12px "Open Sans", sans-serif; color: #8a8a8a; }
.titlebar .title { margin-left: 5px; flex: 1; letter-spacing: -.3px; }
.winctl { width: 110px; height: 22px; margin-right: 14px; }

.menubar { height: 19px; display: flex; padding-left: 10px; color: #8c8c8c; font: 12px/19px "Open Sans", sans-serif; letter-spacing: -.2px; }
.m1 { width: 50px; } .m2 { width: 34px; } .m3 { width: 39px; } .m4 { width: 43px; } .m5 { width: 63px; } .m6 { width: 40px; }
.menubar u { text-underline-offset: 2px; }

.toolbar { display: flex; align-items: center; background: linear-gradient(#fbfbfb, #efefef); border-bottom: 1px solid #b0b0b0; }
.tb1 { height: 40px; border-top: 1px solid #cfcfcf; }
.tb2 { height: 38px; }
.btn { width: 33.100px; flex: none; display: flex; justify-content: center; }
.btn svg { width: 24px; height: 24px; }
.faded svg { opacity: .3; filter: grayscale(1); }
.grip { width: 12.500px; height: 18px; flex: none; background: radial-gradient(circle, #aaa 0 .6px, transparent .8px) 5px 0 / 4px 3px; background-clip: content-box; padding: 0 3px 0 5px; }
.grip.wide { width: 16px; padding: 0 4px 0 7px; }
.sep { width: 6.500px; height: 19px; flex: none; background: linear-gradient(#ccc, #ccc) 3px 0 / 1px 100% no-repeat; }
.combo { display: flex; border: 1px solid #a9a9a9; border-radius: 3px; background: #fff; color: #111; flex: none; }
.combo span { flex: 1; padding-left: 4px; }
.combo em { display: flex; align-items: center; justify-content: center; border-left: 1px solid #bbb; background: linear-gradient(#fefefe, #f0f0f0); color: #555; border-radius: 0 2px 2px 0; }
.combo em svg, .drop svg { width: 8px; height: 5px; }
.pagebox { width: 66px; height: 30px; line-height: 30px; background: #efefef; color: #777; margin-left: -.5px; }
.pagebox em { width: 20px; color: #999; }
.drop { width: 11px; color: #8a8a8a; display: flex; justify-content: center; }

.body { height: 592px; display: flex; }
.toolbox { width: 40px; background: linear-gradient(90deg, #fbfbfb, #efefef); padding: 7px 3px 0 4px; display: flex; flex-direction: column; border-right: 1px solid #aaa; }
.toolbox b { height: 32.100px; display: flex; align-items: center; justify-content: center; border: 1px solid transparent; border-radius: 3px; flex: none; }
.toolbox b svg { width: 23px; height: 23px; }
.toolbox .on { background: #dcdcdc; border-color: #b0b0b0; }
.hgrip { height: 5px; width: 18px; margin: 0 0 0 8px; background: radial-gradient(circle, #aaa 0 .6px, transparent .8px) 0 0 / 3px 4px; }
.more { width: 9px; height: 11px; margin: 19px 0 0 12px; }

.canvas { width: 692px; height: 592px; flex: none; }
.rul { font: 11px "DejaVu Sans Condensed", "DejaVu Sans", sans-serif; font-stretch: condensed; fill: #444; letter-spacing: -.5px; }
.maptitle { font: 600 30.500px "Open Sans", sans-serif; letter-spacing: 0; fill: #000; stroke: #000; stroke-width: .7px; }
.st { font: 14.500px "DejaVu Sans", sans-serif; fill: #151515; text-anchor: middle; letter-spacing: 0; }
.sb { font: 6px "DejaVu Sans", sans-serif; letter-spacing: -.15px; }
.lg { font: 5.700px "DejaVu Sans", sans-serif; letter-spacing: -.1px; }

.dock { width: 292px; flex: none; display: flex; flex-direction: column; }
.tabs { height: 24px; padding-top: 2px; border-bottom: 1px solid #b5b5b5; display: flex; }
.tab { width: 86px; height: 20px; margin-top: 1px; padding: 5px 0 0 12px; background: #c6c6c6; border: 1px solid #aaa; border-radius: 3px 3px 0 0; }
.tab.cur { width: 52px; background: #f4f4f4; margin-top: 0; }
.dockhead { height: 21px; display: flex; justify-content: flex-end; gap: 3px; padding: 6px 2px 0 0; }
.dockhead svg { width: 11px; height: 11px; }
.list { height: 140px; border: 1px solid #aaa; background: #fff; }
.lhead { height: 20px; background: linear-gradient(#fdfdfd, #efefef); border-bottom: 1px solid #aaa; }
.lrow { height: 18px; margin-top: 36px; background: #efefef; }
.second { margin-top: 29px; border-top: 1px solid #b5b5b5; padding-top: 5px; }
.band { height: 17px; background: #c6c6c6; }
.props { flex: 1; display: flex; border-left: 1px solid #aaa; }
.pcol { width: 276px; display: flex; flex-direction: column; }
.ptop { height: 30px; border-bottom: 1px solid #cfcfcf; background: #efefef; }
.pgroup { height: 166px; border-bottom: 1px solid #cfcfcf; background: #ebebeb; padding-top: 15px; }
.prow { display: flex; height: 22px; }
.edit { height: 22px; border: 1px solid #aaa; background: #fff; border-radius: 3px; margin-top: 7px; }
.short { width: 241px; margin-top: 0; }
.override { width: 24px; height: 18px; margin: 2px 0 0 9px; }
.pcombo { height: 24px; margin-top: 8px; border: 1px solid #aaa; border-radius: 3px; background: linear-gradient(#fefefe, #f0f0f0); display: flex; align-items: center; justify-content: flex-end; padding-right: 6px; color: #444; }
.pcombo.last { margin-top: 5px; }
.pcombo svg { width: 8px; height: 5px; }
.ltitle { margin: 0; height: 24px; display: flex; align-items: center; padding: 4px 0 0 13px; font-size: 11px; letter-spacing: 0; }
.ltitle svg { width: 12px; height: 9px; margin-right: 7px; }
.lgroup { height: 104px; margin-left: 12px; border: 1px solid #cfcfcf; border-width: 1px 0 0 1px; background: #ebebeb; padding: 12px 0 0 12px; overflow: hidden; }
.auto { display: flex; align-items: center; height: 20px; }
.auto span { margin-left: 5px; flex: 1; }
.auto button { width: 62px; height: 20px; border-radius: 3px 0 0 3px; }
.chk { width: 14px; height: 14px; border: 1px solid #b5b5b5; background: #fff; flex: none; }
.tree { margin-top: 6px; height: 66px; border: 1px solid #aaa; background: #fff; display: flex; overflow: hidden; font-size: 12px; }
.nodesbox { flex: 1; }
.tn { height: 19px; display: flex; align-items: center; padding-left: 6px; white-space: nowrap; letter-spacing: -.1px; font-size: 11.500px; }
.tarr { width: 8px; height: 5px; color: #444; }
.poly { width: 17px; height: 13px; margin: 0 5px 0 9px; }
.leaf { height: 20px; display: flex; align-items: center; padding-left: 43px; letter-spacing: -.2px; }
.leaf i { width: 18px; height: 18px; border: 1px solid #555; background: #f5faf3; margin-right: 6px; }
.leaf .g { background: #eaf5e6; }
.tscroll { width: 14px; border-left: 1px solid #aaa; }
.tscroll em { height: 14px; border-bottom: 1px solid #aaa; padding: 4px 0 0 2px; }
.tscroll svg, .vscroll svg { width: 8px; height: 5px; color: #444; }
.hscroll { height: 15px; border: 1px solid #aaa; border-left: 0; display: flex; background: #dedede; }
.hscroll em { width: 14px; padding: 2px 0 0 4px; background: #f7f7f7; color: #333; border-right: 1px solid #aaa; }
.hscroll i { width: 227px; background: linear-gradient(#fdfdfd, #efefef); border-right: 1px solid #aaa; margin-right: 21px; }
.hscroll em.r { border-left: 1px solid #aaa; border-right: 0; }
.hscroll .v { width: 5px; height: 8px; }
.vscroll { width: 15px; height: 325px; border: 1px solid #aaa; background: #e3e3e3; display: flex; flex-direction: column; }
.vscroll em { height: 14px; padding: 4px 0 0 3px; background: #f7f7f7; border-bottom: 1px solid #aaa; }
.vscroll i { height: 82px; background: linear-gradient(90deg, #fdfdfd, #efefef); border-bottom: 1px solid #aaa; }
.vscroll .bot { margin-top: auto; border-bottom: 0; border-top: 1px solid #aaa; }

.status { height: 26px; display: flex; align-items: center; padding-left: 6px; }
.s1 { width: 485px; letter-spacing: 0; } .s2 { width: 106px; letter-spacing: -.4px; } .s3 { width: 105px; letter-spacing: -.4px; } .s4 { width: 107px; }
.zoom { width: 108px; height: 22px; line-height: 21px; }
.zoom em { width: 20px; }
.slider { width: 98px; height: 4px; margin-left: 8px; border: 1px solid #b0b0b0; border-radius: 2px; background: #ddd; display: flex; align-items: center; }
.slider i { width: 14px; height: 12px; flex: none; background: #fcfcfc; border: 1px solid #a0a0a0; border-radius: 4px; }

.dialog { position: absolute; left: 525px; top: 130px; width: 430px; height: 444px; border: 1px solid #555; background: #efefef; box-shadow: 0 3px 16px rgba(0, 0, 0, .4); }
.dialog header { height: 30px; background: #fff; display: flex; align-items: center; padding: 0 9px 0 8px; font: 12px "Open Sans", sans-serif; letter-spacing: -.28px; color: #000; }
.dialog header .logo { margin-top: -2px; }
.dialog header span { margin: -1px 0 0 5px; flex: 1; }
.dialog header .x { width: 12px; height: 12px; margin-top: -1px; }
.dbody { padding: 10px 11px 0 12px; }
.dialog h3 { margin: 0 0 1px; height: 19px; display: flex; align-items: center; font-size: 11px; letter-spacing: 0; padding-left: 1px; }
.dialog h3 svg { width: 12px; height: 9px; margin-right: 7px; position: relative; top: 1px; }
.gbox { border: 1px solid #d2d2d2; background: #ececec; padding: 10px 9px 0; }
.g1 { height: 150px; }
.g2 { height: 100px; color: #8a8a8a; }
.frow { display: flex; align-items: center; height: 20px; margin-bottom: 8px; }
.frow label { width: 89px; white-space: nowrap; flex: none; letter-spacing: -.1px; padding-top: 1px; }
.spin { width: 90px; height: 20px; border: 1px solid #a9a9a9; border-radius: 3px; background: #fff; display: flex; line-height: 20px; flex: none; }
.spin span { flex: 1; padding-left: 4px; letter-spacing: -.4px; }
.spin em { width: 14px; border-left: 1px solid #a9a9a9; background: #f6f6f6; padding: 2px 0 0 2px; color: #555; border-radius: 0 2px 2px 0; }
.spin em svg { width: 9px; height: 14px; }
.g2 .spin { background: #efefef; }
.g2 .spin em { color: #aaa; }
.crow { display: flex; align-items: center; height: 17px; margin-bottom: 8px; padding-left: 1px; }
.crow span { margin-left: 4px; letter-spacing: -.28px; }
.h2 .chk { margin: -2px 6px 0 0; }
.dialog .h2 { margin: 5px 0 0; }
.g2 .frow .top { width: 199px; padding-left: 116px; }
.sm { width: 68px; }
.g2 .frow .lf { width: 98px; }
.lg2 { width: 91px; }
.g2 .frow .rt { width: 98px; margin-left: 5px; }
.buttons { display: flex; justify-content: flex-end; gap: 6px; margin-top: 76px; }
.buttons button { width: 80px; height: 21px; }
.buttons .primary { border-color: #4e9fdc; background: linear-gradient(#fdfeff, #e6f0f8); }

.watermark { position: absolute; left: 748px; top: 658px; font-family: "Open Sans", sans-serif; font-stretch: normal; color: rgba(120, 120, 120, .55); white-space: nowrap; }
.w1 { font-size: 19px; line-height: 26px; letter-spacing: 0; }
.w2 { font-size: 13.500px; line-height: 19px; letter-spacing: 0; }
```
